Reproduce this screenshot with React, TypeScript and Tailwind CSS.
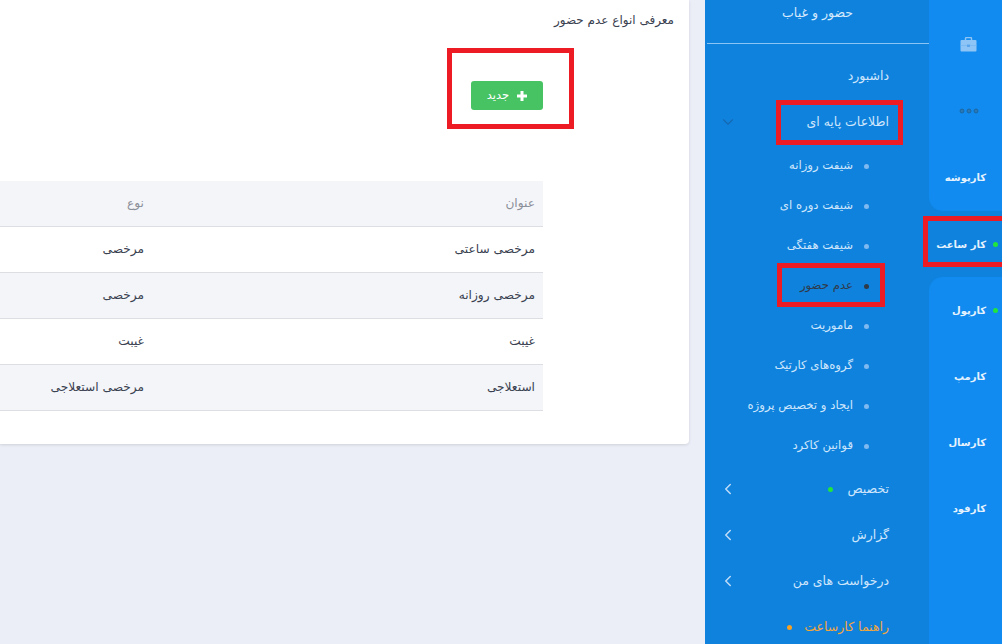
import { ChevronDown, ChevronLeft } from "lucide-react";

const rows = [
  ["مرخصی ساعتی", "مرخصی"],
  ["مرخصی روزانه", "مرخصی"],
  ["غیبت", "غیبت"],
  ["استعلاجی", "مرخصی استعلاجی"],
];

const subItems = ["شیفت روزانه", "شیفت دوره ای", "شیفت هفتگی", "عدم حضور", "ماموریت", "گروه‌های کارتیک", "ایجاد و تخصیص پروژه", "قوانین کاکرد"];

function RailLabel({ label, dot }: { label: string; dot?: boolean }) {
  return (
    <div className="h-[66px] flex items-center pr-[4px]">
      <span className={`w-[5px] h-[5px] rounded-full ${dot ? "bg-[#22e53c]" : ""}`} />
      <span className="mr-[7px] text-[10px] font-bold text-[#e6f2fd]">{label}</span>
    </div>
  );
}

function SubMenu({ label, arrow, children }: { label: string; arrow?: boolean; children?: React.ReactNode }) {
  return (
    <div className="h-[46px] flex items-center pr-[40px] pl-[14px] text-[12.5px] text-[#cfe6fb]">
      <span>{label}</span>
      {children}
      {arrow && <ChevronLeft className="mr-auto w-[18px] h-[18px] text-[#bfdcf7]" strokeWidth={2} />}
    </div>
  );
}

export default function App() {
  return (
    <div dir="rtl" className="relative w-[1002px] h-[644px] overflow-hidden flex bg-[#ebeef6] font-['DejaVu_Sans',sans-serif]">
      {/* icon rail */}
      <div className="w-[73px] shrink-0 flex flex-col bg-[#0f82de]">
        <div className="h-[211px] pt-[11px] bg-[#118bef] rounded-bl-[14px]">
          <div className="h-[66px] flex items-center justify-center pl-[6px]">
            <svg width="17" height="15" viewBox="0 0 17 15">
              <path d="M5.5 3V1.5A1 1 0 0 1 6.5.5h4a1 1 0 0 1 1 1V3" fill="none" stroke="#8fc5f6" strokeWidth="1.4" />
              <rect x="0.5" y="3" width="16" height="11.5" rx="1" fill="#8fc5f6" />
              <rect x="0.5" y="8.4" width="16" height="0.6" fill="#6fb2f2" />
              <rect x="7" y="7.5" width="3" height="2.5" fill="#5aa6ee" />
            </svg>
          </div>
          <div className="h-[67px] flex items-center justify-center pl-[6px]">
            <svg width="20" height="6" viewBox="0 0 20 6" fill="#2b78b5" stroke="#1a68a6" strokeWidth="1">
              <circle cx="3" cy="3" r="2" />
              <circle cx="10" cy="3" r="2" />
              <circle cx="17" cy="3" r="2" />
            </svg>
          </div>
          <RailLabel label="کارپوشه" />
        </div>
        <RailLabel label="کار ساعت" dot />
        <div className="flex-1 bg-[#118bef] rounded-tl-[14px]">
          <RailLabel label="کارپول" dot />
          <RailLabel label="کارمپ" />
          <RailLabel label="کارسال" />
          <RailLabel label="کارفود" />
        </div>
      </div>

      {/* side menu */}
      <div className="w-[224px] shrink-0 bg-[#0f82de]">
        <div className="h-[44px] ml-[2px] border-b border-[#8cc4f4] text-[12.5px] text-[#d6eafc] pr-[76px] pt-[4px]">حضور و غیاب</div>
        <div className="pt-[9px]">
          <SubMenu label="داشبورد" />
          <div className="h-[46px] flex items-center pr-[40px] pl-[14px] text-[12.5px] text-[#cfe6fb]">
            <span>اطلاعات پایه ای</span>
            <ChevronDown className="mr-auto w-[18px] h-[18px] text-[#1668b0]" strokeWidth={1.5} />
          </div>
          <div className="pt-[1px]">
            {subItems.map((s) => {
              const active = s === "عدم حضور";
              return (
                <div key={s} className="h-[40px] flex items-center pr-[60px] text-[11.7px]">
                  <span className={`w-[5px] h-[5px] rounded-full ${active ? "bg-[#2f3a48]" : "bg-[#7fb9f0]"}`} />
                  <span className={`mr-[11px] ${active ? "text-[#2f3a48]" : "text-[#cfe6fb]"}`}>{s}</span>
                </div>
              );
            })}
          </div>
          <SubMenu label="تخصیص" arrow>
            <span className="mr-[15px] w-[5px] h-[5px] rounded-full bg-[#22e53c]" />
          </SubMenu>
          <SubMenu label="گزارش" arrow />
          <SubMenu label="درخواست های من" arrow />
          <div className="h-[46px] flex items-center pr-[40px] text-[12.5px] text-[#f2a63c]">
            <span>راهنما کارساعت</span>
            <span className="mr-[12px] w-[5px] h-[5px] rounded-full bg-[#f7a022]" />
          </div>
        </div>
      </div>

      {/* content */}
      <div className="flex-1 min-w-0">
        <div className="mr-[16px] h-[444px] bg-white rounded-br-[4px] shadow-[0_1px_3px_rgba(0,0,0,0.12)]">
          <div className="pr-[15px] pt-[11px] text-[12px] leading-[18px] text-[#3a4150]">معرفی انواع عدم حضور</div>
          <div className="mr-[146px] mt-[52px]">
            <button className="w-[72px] h-[29px] rounded-[3px] bg-[#48c363] text-white text-[11.5px] flex items-center justify-center gap-[8px]">
              <svg width="10" height="10" viewBox="0 0 10 10" fill="#fff">
                <path d="M3.5 0h3v3.5H10v3H6.5V10h-3V6.5H0v-3h3.5z" />
              </svg>
              <span>جدید</span>
            </button>
          </div>
          <div className="mr-[146px] mt-[71px]">
            <table className="w-[543px] table-fixed border-collapse text-[12.2px] text-[#3a4150]">
              <thead>
                <tr className="h-[45px] bg-[#f3f5f9] border-b border-[#dcdee3] text-[#8b8f98]">
                  <th className="w-[391px] px-[8px] text-right font-normal">عنوان</th>
                  <th className="px-[8px] text-right font-normal">نوع</th>
                </tr>
              </thead>
              <tbody>
                {rows.map((r, i) => (
                  <tr key={i} className={`h-[46px] border-b border-[#dcdee3] ${i % 2 ? "bg-[#f3f5f9]" : "bg-white"}`}>
                    <td className="px-[8px]">{r[0]}</td>
                    <td className="px-[8px]">{r[1]}</td>
                  </tr>
                ))}
              </tbody>
            </table>
          </div>
        </div>
      </div>

      {/* red annotation boxes */}
      <div className="absolute left-[447px] top-[48px] w-[127px] h-[81px] border-[5px] border-[#ed1c24]" />
      <div className="absolute left-[776px] top-[100px] w-[127px] h-[45px] border-[5px] border-[#ed1c24]" />
      <div className="absolute left-[777px] top-[263px] w-[108px] h-[44px] border-[5px] border-[#ed1c24]" />
      <div className="absolute left-[923px] top-[216px] w-[90px] h-[51px] border-[5px] border-[#ed1c24]" />
    </div>
  );
}
